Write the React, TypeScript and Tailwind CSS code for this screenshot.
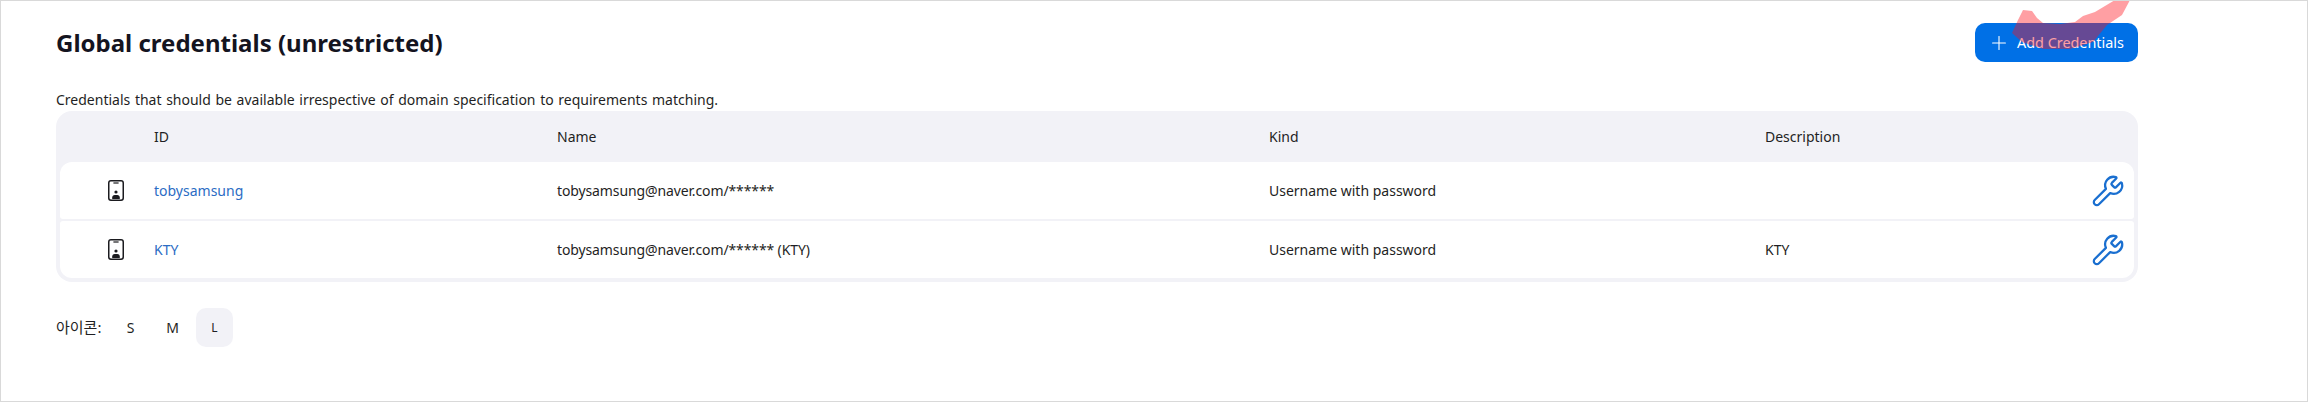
import { Plus, Wrench } from 'lucide-react'

const credentials = [
  { id: 'tobysamsung', name: 'tobysamsung@naver.com/******', kind: 'Username with password', description: '' },
  { id: 'KTY', name: 'tobysamsung@naver.com/****** (KTY)', kind: 'Username with password', description: 'KTY' },
]

const columns = 'grid grid-cols-[94px_403px_712px_496px_1fr] items-center'

function PhoneIcon() {
  return (
    <svg width="18" height="23" viewBox="0 0 18 23" fill="none" className="text-[#1b1b1f]">
      <rect x="1.75" y="1.75" width="14.5" height="19.5" rx="2.2" stroke="currentColor" strokeWidth="1.5" />
      <path d="M6.4 4h5.2" stroke="currentColor" strokeWidth="1.2" />
      <circle cx="9" cy="13" r="1.6" fill="currentColor" />
      <path d="M5.2 20v-1.6c0-1.4 1.1-2.4 2.5-2.4h2.6c1.4 0 2.5 1 2.5 2.4V20z" fill="currentColor" />
    </svg>
  )
}

export default function App() {
  return (
    <div className="relative h-[402px] w-[2308px] overflow-hidden border border-[#d9d9d9] bg-white font-['Noto_Sans','Noto_Sans_CJK_KR',sans-serif] text-[#1f1f24]">
      <div className="pl-[55px] pr-[169px] pt-[22px]">
        <div className="flex h-[39px] items-center justify-between">
          <h1 className="text-[24px] font-bold leading-[32px] text-[#14141f]">Global credentials (unrestricted)</h1>
          <button className="flex h-[39px] w-[163px] items-center gap-[7px] rounded-[10px] bg-[#0070e6] pl-[13px] text-[14.4px] text-white">
            <Plus size={22} strokeWidth={1.2} />
            Add Credentials
          </button>
        </div>

        <p className="mt-[28px] h-[21px] text-[14px] leading-[20px] [word-spacing:1px]">
          Credentials that should be available irrespective of domain specification to requirements matching.
        </p>

        <div className="rounded-[16px] bg-[#f2f2f7] px-1 pb-1">
          <div className={`${columns} h-[51px] text-[14px]`}>
            <div />
            <div>ID</div>
            <div>Name</div>
            <div>Kind</div>
            <div>Description</div>
          </div>
          <div className="flex flex-col gap-[2px]">
            {credentials.map((cred, i) => (
              <div
                key={cred.id}
                className={`${columns} h-[57px] bg-white text-[14px] ${
                  i === 0 ? 'rounded-t-[12px] rounded-b-[3px]' : 'rounded-t-[3px] rounded-b-[12px]'
                }`}
              >
                <div className="flex justify-end pr-[29px]">
                  <PhoneIcon />
                </div>
                <a className="text-[#2b6cc4]">{cred.id}</a>
                <div className="tracking-[-0.12px]">{cred.name}</div>
                <div>{cred.kind}</div>
                <div className="flex items-center justify-between pr-[9px]">
                  <span>{cred.description}</span>
                  <Wrench size={34} strokeWidth={1.6} className="text-[#1a6fd0]" />
                </div>
              </div>
            ))}
          </div>
        </div>

        <div className="mt-[26px] flex h-[39px] items-center text-[14px]">
          <span className="w-[56px] text-[15px]">아이콘:</span>
          <div className="flex gap-[5px]">
            <button className="h-[39px] w-[37px] rounded-[10px]">S</button>
            <button className="h-[39px] w-[37px] rounded-[10px]">M</button>
            <button className="h-[39px] w-[37px] rounded-[10px] bg-[#f2f2f7] text-[12px]">L</button>
          </div>
        </div>
      </div>

      {/* pink highlighter stroke drawn over the button */}
      <svg className="absolute left-[1999px] top-[-1px] text-[#ff111c] opacity-40" width="140" height="55" viewBox="2000 0 140 55">
        <path
          d="M2012 33 L2018 20 L2023 10 L2032 11 L2037 18 L2043 23 L2060 24 L2075 22 L2083 16 L2095 12 L2115 0 L2130 0 L2122 15 L2107 25 L2093 42 L2070 49 L2043 49 L2022 42 Z"
          fill="currentColor"
        />
      </svg>
    </div>
  )
}
